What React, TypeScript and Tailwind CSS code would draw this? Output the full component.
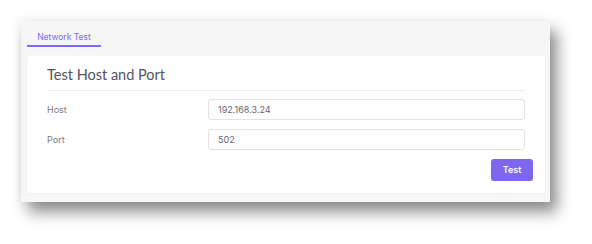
export default function App() {
  return (
    <div className="h-[244px] w-[592px] bg-white pl-[21px] pt-[21px] font-['Inter',sans-serif]">
      <div className="w-[529px] bg-[#f6f6f7] pb-[9px] pl-[6px] pr-[5px] shadow-[7px_10px_14px_rgba(0,0,0,0.45),-2px_-2px_10px_rgba(0,0,0,0.06)]">
        <div className="flex h-[26px] items-end">
          <div className="flex h-[26px] w-[74px] items-start justify-center border-b-2 border-[#7b6cf0] pt-[12px] text-[8.5px] leading-none text-[#7b6cf0]">
            Network Test
          </div>
        </div>
        <div className="mt-[9px] rounded-[3px] bg-white pb-[12px] pl-[20px] pr-[12px] pt-[9px] shadow-[0_1px_2px_rgba(0,0,0,0.04)]">
          <div className="pr-[8px]">
            <h2 className="h-[20px] font-['Lato',sans-serif] text-[14.5px] leading-[20px] text-[#52525f]">
              Test Host and Port
            </h2>
            <div className="mt-[5px] h-px bg-[#eeeeef]" />
            <div className="mt-[8px] flex flex-col gap-[9px]">
              <Field label="Host" value="192.168.3.24" />
              <Field label="Port" value="502" />
            </div>
          </div>
          <div className="mt-[9px] flex justify-end">
            <button className="h-[22px] w-[42px] rounded-[3px] bg-[#7b68ee] text-[9px] font-semibold text-white">
              Test
            </button>
          </div>
        </div>
      </div>
    </div>
  );
}

function Field({ label, value }: { label: string; value: string }) {
  return (
    <div className="flex items-center">
      <label className="w-[161px] text-[9px] text-[#7a7a86]">{label}</label>
      <input
        defaultValue={value}
        className="h-[21px] flex-1 rounded-[3px] border border-[#e3e3e6] px-[9px] text-[9px] text-[#66666f] outline-none"
      />
    </div>
  );
}
